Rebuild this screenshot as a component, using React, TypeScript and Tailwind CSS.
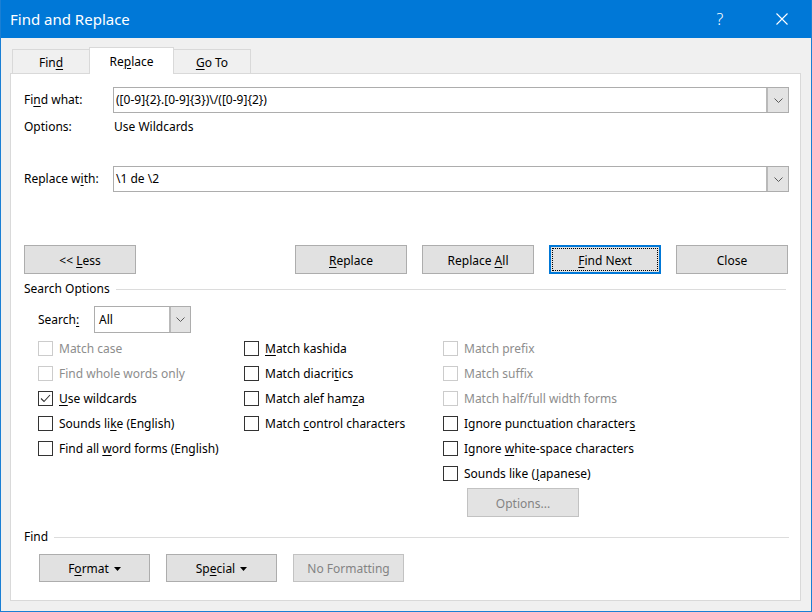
import React from "react";

const U = ({ children }: { children: React.ReactNode }) => (
  <span className="underline underline-offset-[2px] decoration-[1px]">{children}</span>
);

function Chevron() {
  return (
    <svg width="9" height="5" viewBox="0 0 9 5" className="block">
      <path d="M0.5 0.5 L4.5 4.5 L8.5 0.5" fill="none" stroke="#5a5a5a" strokeWidth="1" />
    </svg>
  );
}

function Tri() {
  return (
    <svg width="7" height="4" viewBox="0 0 7 4" className="block ml-[5px]">
      <path d="M0 0 L7 0 L3.5 4 Z" fill="#000" />
    </svg>
  );
}

function TextCombo({ text }: { text: string }) {
  return (
    <div className="w-[676px] h-[26px] border border-[#adadad] bg-white flex">
      <div className="flex-1 flex items-center pl-[2px] text-black">{text}</div>
      <div className="w-[22px] h-full bg-[#e3e3e3] border-l-2 border-[#b9b9b9] flex items-center justify-center">
        <Chevron />
      </div>
    </div>
  );
}

function Btn({
  children,
  disabled,
  focused,
}: {
  children: React.ReactNode;
  disabled?: boolean;
  focused?: boolean;
}) {
  if (focused) {
    return (
      <div className="relative w-[112px] h-[29px] bg-[#e1e1e1] border-2 border-[#0078d7] flex items-center justify-center text-black pt-[2px]">
        <div className="absolute inset-[1px] border border-dotted border-black" />
        <span className="whitespace-pre">{children}</span>
      </div>
    );
  }
  return (
    <div
      className={`w-[112px] h-[29px] border flex items-center justify-center pt-[2px] ${
        disabled ? "bg-[#e3e3e3] border-[#c2c2c2] text-[#838383]" : "bg-[#e1e1e1] border-[#adadad] text-black"
      }`}
    >
      <span className="whitespace-pre">{children}</span>
    </div>
  );
}

function SmallBtn({ children, disabled }: { children: React.ReactNode; disabled?: boolean }) {
  return (
    <div
      className={`w-[111px] h-[28px] border flex items-center justify-center pt-[1px] ${
        disabled ? "bg-[#e3e3e3] border-[#c2c2c2] text-[#838383]" : "bg-[#e1e1e1] border-[#adadad] text-black"
      }`}
    >
      {children}
    </div>
  );
}

function Check({
  label,
  disabled,
  checked,
}: {
  label: React.ReactNode;
  disabled?: boolean;
  checked?: boolean;
}) {
  return (
    <div className="flex items-center h-[25px]">
      <div
        className={`w-[15px] h-[15px] border bg-white flex items-center justify-center shrink-0 ${
          disabled ? "border-[#cccccc]" : "border-[#333333]"
        }`}
      >
        {checked && (
          <svg width="13" height="13" viewBox="0 0 13 13" className="block">
            <path d="M2 6.5 L5 9.5 L11 3" fill="none" stroke="#333" strokeWidth="1.1" />
          </svg>
        )}
      </div>
      <span className={`ml-[6px] whitespace-nowrap ${disabled ? "text-[#8d8d8d]" : "text-black"}`}>{label}</span>
    </div>
  );
}

export default function App() {
  return (
    <div className="w-[812px] h-[612px] bg-[#f0f0f0] border-x border-b border-[#1a7fd4] flex flex-col font-['Noto_Sans',sans-serif] text-[12px] leading-[16px] text-black select-none overflow-hidden">
      {/* Title bar */}
      <div className="h-[38px] bg-[#0078d7] flex items-center text-white shrink-0">
        <div className="ml-[9px] text-[15px] leading-[20px]">Find and Replace</div>
        <div className="flex-1" />
        <div className="w-[20px] text-center text-[16px] leading-[20px] mr-[46px] font-light">?</div>
        <div className="w-[12px] h-[12px] mr-[23px]">
          <svg width="12" height="12" viewBox="0 0 12 12" className="block">
            <path d="M0.5 0.5 L11.5 11.5 M11.5 0.5 L0.5 11.5" stroke="#fff" strokeWidth="1.1" />
          </svg>
        </div>
      </div>

      {/* Tabs */}
      <div className="mt-[9px] ml-[11px] flex items-end">
        <div className="w-[77px] h-[24px] border-l border-t border-[#d9d9d9] flex items-center justify-center pt-[3px]">
          <span>
            Fin<U>d</U>
          </span>
        </div>
        <div className="relative z-10 -mb-px w-[85px] h-[27px] bg-white border-x border-t border-[#d9d9d9] flex items-center justify-center pt-[2px]">
          <span>
            Re<U>p</U>lace
          </span>
        </div>
        <div className="w-[77px] h-[24px] border-r border-t border-[#d9d9d9] flex items-center justify-center pt-[3px]">
          <span>
            <U>G</U>o To
          </span>
        </div>
      </div>

      {/* Panel */}
      <div className="ml-[9px] w-[791px] h-[528px] bg-white border border-[#d9d9d9] flex flex-col pl-[13px]">
        {/* Find what */}
        <div className="mt-[13px] flex items-center">
          <div className="w-[89px]">
            Fi<U>n</U>d what:
          </div>
          <TextCombo text="([0-9]{2}.[0-9]{3})\/([0-9]{2})" />
        </div>
        <div className="mt-[6px] flex h-[16px]">
          <div className="w-[90px]">Options:</div>
          <div>Use Wildcards</div>
        </div>

        {/* Replace with */}
        <div className="mt-[31px] flex items-center">
          <div className="w-[89px]">
            Replace w<U>i</U>th:
          </div>
          <TextCombo text="\1 de \2" />
        </div>

        {/* Buttons */}
        <div className="mt-[53px] flex">
          <Btn>
            &lt;&lt;&nbsp;<U>L</U>ess
          </Btn>
          <div className="w-[159px]" />
          <div className="flex gap-[15px]">
            <Btn>
              <U>R</U>eplace
            </Btn>
            <Btn>
              Replace <U>A</U>ll
            </Btn>
            <Btn focused>
              <U>F</U>ind Next
            </Btn>
            <Btn>Close</Btn>
          </div>
        </div>

        {/* Search Options */}
        <div className="mt-[7px] flex items-center h-[16px]">
          <div>Search Options</div>
          <div className="ml-[6px] w-[670px] h-px bg-[#dcdcdc]" />
        </div>

        <div className="pl-[14px]">
          <div className="mt-[9px] flex items-center">
            <div className="w-[56px] pt-[1px]">
              Search<U>:</U>
            </div>
            <div className="w-[97px] h-[27px] border border-[#adadad] bg-white flex">
              <div className="flex-1 flex items-center pl-[4px] pt-[1px]">All</div>
              <div className="w-[21px] h-full bg-[#e3e3e3] border-l-2 border-[#b9b9b9] flex items-center justify-center">
                <Chevron />
              </div>
            </div>
          </div>

          <div className="mt-[3px] flex">
            <div className="w-[206px] flex flex-col">
              <Check disabled label="Match case" />
              <Check disabled label="Find whole words only" />
              <Check checked label={<><U>U</U>se wildcards</>} />
              <Check label={<>Sounds li<U>k</U>e (English)</>} />
              <Check label={<>Find all <U>w</U>ord forms (English)</>} />
            </div>
            <div className="w-[199px] flex flex-col">
              <Check label={<><U>M</U>atch kashida</>} />
              <Check label={<>Match diacri<U>t</U>ics</>} />
              <Check label={<>Match alef ham<U>z</U>a</>} />
              <Check label={<>Match <U>c</U>ontrol characters</>} />
            </div>
            <div className="flex flex-col">
              <Check disabled label="Match prefix" />
              <Check disabled label="Match suffix" />
              <Check disabled label="Match half/full width forms" />
              <Check label={<>Ignore punctuation character<U>s</U></>} />
              <Check label={<>Ignore <U>w</U>hite-space characters</>} />
              <Check label={<>Sounds like (<U>J</U>apanese)</>} />
              <div className="mt-[2px] ml-[24px]">
                <Btn disabled>Options...</Btn>
              </div>
            </div>
          </div>
        </div>

        {/* Find section */}
        <div className="mt-[12px] flex items-center h-[16px]">
          <div>Find</div>
          <div className="ml-[6px] w-[735px] h-px bg-[#dcdcdc]" />
        </div>
        <div className="mt-[9px] ml-[15px] flex gap-[16px]">
          <SmallBtn>
            <span>
              F<U>o</U>rmat
            </span>
            <Tri />
          </SmallBtn>
          <SmallBtn>
            <span>
              Sp<U>e</U>cial
            </span>
            <Tri />
          </SmallBtn>
          <SmallBtn disabled>No Formatting</SmallBtn>
        </div>
      </div>
    </div>
  );
}
